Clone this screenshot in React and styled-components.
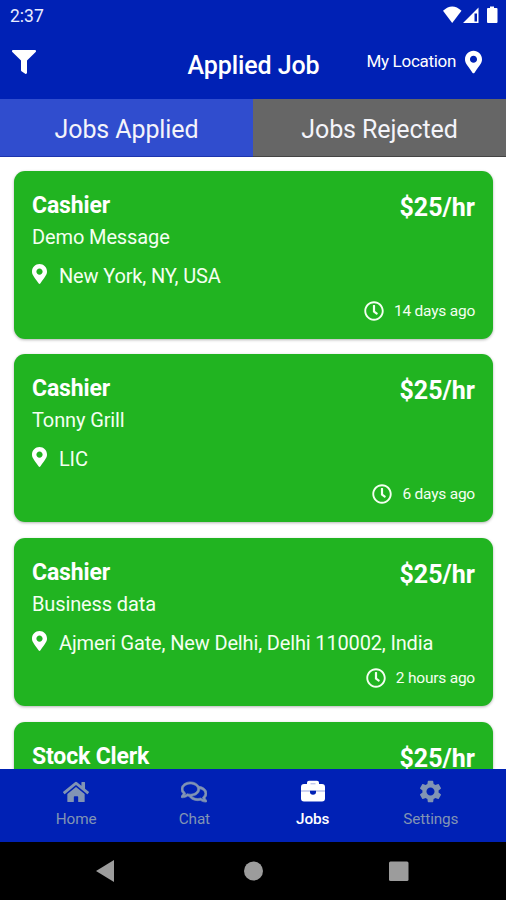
import React from "react";
import styled, { createGlobalStyle } from "styled-components";
import {
  FaFilter,
  FaHome,
  FaMapMarkerAlt,
  FaRegClock,
  FaRegComments,
} from "react-icons/fa";
import { MdSettings } from "react-icons/md";

const GlobalStyle = createGlobalStyle`
  * {
    box-sizing: border-box;
  }

  body {
    margin: 0;
    background: #fff;
    font-family: Roboto, sans-serif;
  }
`;

const Screen = styled.div`
  display: flex;
  flex-direction: column;
  width: 506px;
  height: 900px;
  overflow: hidden;
  background: #fff;
`;

const StatusBar = styled.div`
  display: flex;
  justify-content: space-between;
  height: 32px;
  padding: 6px 7px 0 10px;
  background: #0021b5;
  color: #e9ecff;
`;

const Time = styled.span`
  font-size: 17.5px;
  line-height: 21px;
`;

const StatusIcons = styled.svg`
  width: 56px;
  height: 18px;
`;

const Header = styled.header`
  display: grid;
  grid-template-columns: 1fr auto 1fr;
  height: 67px;
  padding: 0 24px 0 12px;
  background: #0021b5;
  color: #fff;
`;

const FilterButton = styled.div`
  padding-top: 18px;
  font-size: 24px;
  line-height: 0;
`;

const Title = styled.h1`
  margin: 0;
  padding: 19px 0 0 13px;
  font-size: 25px;
  font-weight: 500;
  letter-spacing: -0.08px;
  line-height: 30px;
  white-space: nowrap;
`;

const MyLocation = styled.div`
  display: flex;
  justify-content: flex-end;
  gap: 9px;
  padding-top: 18px;
  font-size: 17px;
  letter-spacing: -0.3px;
  line-height: 23px;
  white-space: nowrap;

  svg {
    width: 17px;
    height: 24px;
  }
`;

const Tabs = styled.div`
  display: flex;
  height: 58px;
`;

const Tab = styled.div`
  flex: 1;
  padding-top: 14px;
  border-bottom: 1px solid ${(props) => (props.$active ? "#1d35ad" : "#444")};
  background: ${(props) => (props.$active ? "#304dce" : "#666")};
  color: #f4f4fa;
  font-size: 25px;
  letter-spacing: -0.1px;
  line-height: 33px;
  text-align: center;
`;

const JobList = styled.main`
  display: flex;
  flex: 1;
  flex-direction: column;
  gap: 15.6px;
  min-height: 0;
  padding: 13.9px 13px 0 14px;
  overflow: hidden;
`;

const Card = styled.article`
  display: flex;
  flex: none;
  flex-direction: column;
  height: 168px;
  padding: 21px 18px 0;
  border-radius: 11px;
  background: #21b421;
  box-shadow: 0 1px 3px rgba(0, 0, 0, 0.3);
  color: #f4fff1;
`;

const CardTop = styled.div`
  display: flex;
  justify-content: space-between;
  color: #fff;
  font-weight: 700;
`;

const JobTitle = styled.h2`
  margin: 0;
  font-size: 23px;
  font-weight: 700;
  letter-spacing: -0.15px;
  line-height: 28px;
`;

const Pay = styled.span`
  font-size: 25px;
  line-height: 31px;
`;

const Company = styled.div`
  margin-top: 1px;
  font-size: 20px;
  letter-spacing: -0.12px;
  line-height: 26px;
`;

const Place = styled.div`
  display: flex;
  gap: 12px;
  margin-top: 13px;
  font-size: 20px;
  letter-spacing: -0.15px;
  line-height: 26px;
  white-space: nowrap;

  svg {
    width: 15px;
    height: 20px;
    margin-top: 1px;
    color: #fff;
  }
`;

const Posted = styled.div`
  display: flex;
  align-items: center;
  justify-content: flex-end;
  gap: 10px;
  margin-top: 12px;
  font-size: 15.5px;
  letter-spacing: -0.22px;
  line-height: 20px;

  svg {
    width: 20px;
    height: 20px;
  }
`;

const TabBar = styled.nav`
  display: flex;
  flex: none;
  height: 73px;
  padding: 10px 16px 0 17px;
  background: #0021b5;
`;

const NavItem = styled.div`
  display: flex;
  flex: 1;
  flex-direction: column;
  align-items: center;
  gap: 5px;
  color: ${(props) => (props.$active ? "#fff" : "#8194b4")};
  font-size: 15.3px;
  font-weight: ${(props) => (props.$active ? 500 : 400)};
  letter-spacing: -0.1px;
  line-height: 20px;
`;

const NavGlyph = styled.span`
  display: flex;
  align-items: center;
  justify-content: center;
  height: 25px;
`;

const ChatIcon = styled(FaRegComments)`
  stroke: currentColor;
  stroke-width: 14px;
`;

const SystemBar = styled.div`
  display: flex;
  flex: none;
  align-items: center;
  justify-content: center;
  height: 58px;
  background: #000;
`;

const SystemButtons = styled.svg`
  width: 314px;
  height: 24px;
  fill: #9c9c9c;
`;

function BriefcaseIcon() {
  return (
    <svg width="24" height="25" viewBox="0 0 24 25" fill="currentColor">
      <path d="M6 5V3.8Q6 1.8 8 1.8H16Q18 1.8 18 3.8V5H21Q24 5 24 8V19.5Q24 22.5 21 22.5H3Q0 22.5 0 19.5V8Q0 5 3 5Z" />
      <path d="M9.5 4.8H14.5" stroke="#aab4e6" strokeWidth="1" />
      <path d="M0 12H24" stroke="#aab4e6" strokeWidth="1.2" />
      <path d="M9 11.8H15V13Q15 15.7 12 15.7T9 13Z" fill="#0021b5" />
    </svg>
  );
}

const jobs = [
  { id: 1, title: "Cashier", company: "Demo Message", place: "New York, NY, USA", posted: "14 days ago" },
  { id: 2, title: "Cashier", company: "Tonny Grill", place: "LIC", posted: "6 days ago" },
  {
    id: 3,
    title: "Cashier",
    company: "Business data",
    place: "Ajmeri Gate, New Delhi, Delhi 110002, India",
    posted: "2 hours ago",
  },
  { id: 4, title: "Stock Clerk" },
];

const JobCard = ({ job }) => (
  <Card>
    <CardTop>
      <JobTitle>{job.title}</JobTitle>
      <Pay>$25/hr</Pay>
    </CardTop>
    {job.company && (
      <>
        <Company>{job.company}</Company>
        <Place>
          <FaMapMarkerAlt />
          {job.place}
        </Place>
        <Posted>
          <FaRegClock />
          {job.posted}
        </Posted>
      </>
    )}
  </Card>
);

const App = () => {
  return (
    <>
      <GlobalStyle />
      <Screen>
        <StatusBar>
          <Time>2:37</Time>
          <StatusIcons viewBox="0 0 56 18" fill="#fff">
            <path d="M0 4.8Q9.2 -3.8 18.5 4.8L9.2 17Z" />
            <path
              d="M20 17L35.5 1.5V17ZM31.5 7.5V15.5H34V7.5Z"
              fillRule="evenodd"
            />
            <path d="M44 3Q44 2 45 2H47V0.5H51V2H53.5Q54.5 2 54.5 3V16Q54.5 17 53.5 17H45Q44 17 44 16Z" />
          </StatusIcons>
        </StatusBar>
        <Header>
          <FilterButton>
            <FaFilter />
          </FilterButton>
          <Title>Applied Job</Title>
          <MyLocation>
            My Location
            <FaMapMarkerAlt />
          </MyLocation>
        </Header>
        <Tabs>
          <Tab $active>Jobs Applied</Tab>
          <Tab>Jobs Rejected</Tab>
        </Tabs>
        <JobList>
          {jobs.map((job) => (
            <JobCard key={job.id} job={job} />
          ))}
        </JobList>
        <TabBar>
          <NavItem>
            <NavGlyph>
              <FaHome size={26} />
            </NavGlyph>
            Home
          </NavItem>
          <NavItem>
            <NavGlyph>
              <ChatIcon size={26} />
            </NavGlyph>
            Chat
          </NavItem>
          <NavItem $active>
            <NavGlyph>
              <BriefcaseIcon />
            </NavGlyph>
            Jobs
          </NavItem>
          <NavItem>
            <NavGlyph>
              <MdSettings size={27} />
            </NavGlyph>
            Settings
          </NavItem>
        </TabBar>
        <SystemBar>
          <SystemButtons viewBox="0 0 314 24">
            <path d="M0 12L18 1V23Z" />
            <circle cx="157.5" cy="12" r="9.5" />
            <rect x="293" y="2.5" width="19.5" height="19.5" rx="1.5" />
          </SystemButtons>
        </SystemBar>
      </Screen>
    </>
  );
};

export default App;
